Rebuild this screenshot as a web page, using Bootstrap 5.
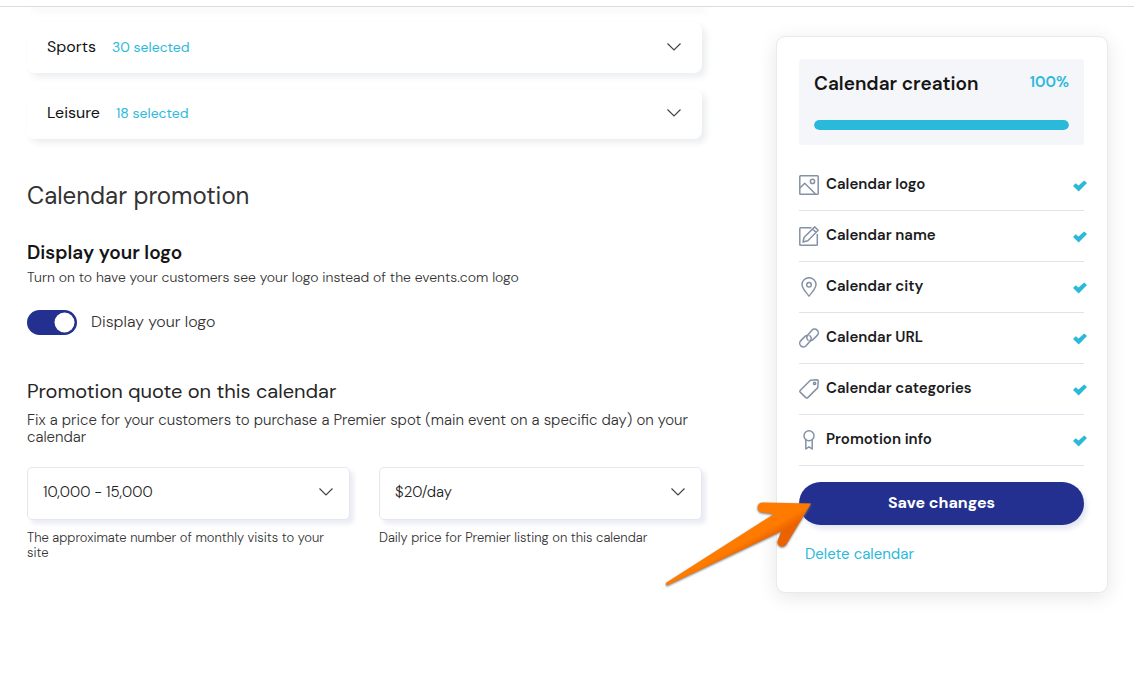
<!DOCTYPE html>
<html lang="en">
<head>
<meta charset="utf-8">
<meta name="viewport" content="width=device-width, initial-scale=1">
<title>Calendar settings</title>
<link href="https://cdn.jsdelivr.net/npm/bootstrap@5.3.0/dist/css/bootstrap.min.css" rel="stylesheet">
<style>
:root { --navy: #24308f; --cyan: #2bb9da; --ink: #1b1c1e; --slate: #8492a6; }
body { font-family: "DM Sans", Inter, "Liberation Sans", sans-serif; font-optical-sizing: none; color: #333; background: #fff; font-size: 15px; line-height: 17px; }
.topbar { height: 7px; border-bottom: 1px solid #d9dce0; z-index: 2; }
.page { padding: 0 26px 88px 27px; gap: 74px; }
.side { flex: 0 0 332px; margin-top: 29px; }
.category { height: 50px; padding: 0 21px 2px 20px; border-radius: 8px; box-shadow: 4px 4px 6px rgba(60, 75, 100, .1); background: #fff; color: #111; }
.category-cut { height: 2px; margin-top: -2px; }
.category-name { font-size: 16px; padding-bottom: 2px; }
.picked { font-size: 14px; color: var(--cyan); }
h2 { font-size: 24px; line-height: 30px; font-weight: 400; margin: 42px 0 0; }
h3 { font-size: 19px; line-height: 24px; font-weight: 600; color: #151515; margin: 30px 0 0; }
h3.quote { font-size: 20px; font-weight: 400; color: #262626; margin-top: 44px; }
.note { font-size: 14px; font-weight: 300; margin: 4px 0 0; }
.intro { font-weight: 300; margin: 9px 0 0; }
.toggle { min-height: 25px; margin: 24px 0 0; padding: 0; gap: 14px; }
.form-switch.toggle .form-check-input { width: 50px; height: 25px; margin: 0; border: 0; background-size: 25px; }
.toggle .form-check-input:checked { background-color: var(--navy);
  background-image: url("data:image/svg+xml,%3Csvg xmlns='http://www.w3.org/2000/svg' viewBox='0 0 25 25'%3E%3Ccircle cx='12.500' cy='12.500' r='10' fill='white'/%3E%3C/svg%3E"); }
.toggle label { font-size: 16px; font-weight: 300; padding-bottom: 2px; }
.fields { --bs-gutter-x: 29px; margin-top: 21px; }
.form-select { height: 53px; padding: 0 40px 2px 15px; font-size: 15px; font-weight: 300; color: #222; border: 1px solid #e6e7ec; border-radius: 5px; box-shadow: 4px 4px 4px rgba(36, 48, 143, .09);
  background-position: right 16px top 20px; background-size: 14px 8px;
  background-image: url("data:image/svg+xml,%3Csvg xmlns='http://www.w3.org/2000/svg' viewBox='0 0 14 8'%3E%3Cpath d='M.5.5 7 7 13.5.5' fill='none' stroke='%23444' stroke-width='1.2'/%3E%3C/svg%3E"); }
.hint { font-size: 13px; line-height: 15px; font-weight: 300; margin-top: 10px; padding-right: 8px; }
.panel { padding: 22px 23px 29px 22px; border: 1px solid #e9eaeb; border-radius: 9px; box-shadow: 0 4px 20px rgba(0, 0, 0, .1); background: #fff; }
.meter { background: #f5f6f9; border-radius: 3px; padding: 13px 15px 15px; }
.meter h3 { margin: 0; }
.percent { color: var(--cyan); font-weight: 600; line-height: 20px; }
.meter .progress { height: 10px; margin-top: 24px; border-radius: 5px; }
.meter .progress-bar { background: var(--cyan); border-radius: 5px; }
.steps { margin: 15px 0 16px; }
.steps li { height: 51px; border-bottom: 1px solid #dde4ec; padding-bottom: 1px; color: var(--ink); font-weight: 600; gap: 7px; }
.steps .glyph { width: 20px; height: 20px; fill: none; stroke: var(--slate); stroke-width: 1.5; stroke-linejoin: round; flex: none; }
.steps .tick { width: 14px; height: 12px; fill: var(--cyan); margin: 3px -3px 0 auto; flex: none; }
.btn-save { height: 43px; border-radius: 22px; background: var(--navy); color: #fff; font-size: 16px; font-weight: 700; padding: 0 0 2px; border: 0; box-shadow: 3px 4px 5px rgba(36, 48, 143, .12); }
.btn-save:hover { background: #1b2575; color: #fff; }
.pointer { position: absolute; top: 19px; right: calc(100% - 14px); width: 147px; height: 87px; pointer-events: none; overflow: visible; }
.remove { color: var(--cyan); margin: 21px 0 0 6px; }
@media (max-width: 800px) { .page { flex-wrap: wrap; gap: 24px; } .side { flex: 1 1 100%; } }
</style>
</head>
<body>
<svg class="d-none" aria-hidden="true">
  <symbol id="tick" viewBox="0 0 14 12"><path d="M0 6 2.7 3.3 5.5 5.6 11.2.5 14 3 5.7 11.6Z"/></symbol>
  <symbol id="chevron" viewBox="0 0 14 8"><path d="M.5.5 7 7 13.5.5" fill="none" stroke="#444" stroke-width="1.2"/></symbol>
</svg>
<header class="topbar bg-white position-relative"></header>
<div class="page d-flex align-items-start">
  <main class="flex-grow-1">
    <div class="d-grid gap-3">
      <div class="category category-cut"></div>
      <button type="button" class="category w-100 border-0 d-flex align-items-center">
        <span class="category-name">Sports</span><span class="picked ms-3">30 selected</span>
        <svg class="ms-auto" width="14" height="8" aria-hidden="true"><use href="#chevron"/></svg>
      </button>
      <button type="button" class="category w-100 border-0 d-flex align-items-center">
        <span class="category-name">Leisure</span><span class="picked ms-3">18 selected</span>
        <svg class="ms-auto" width="14" height="8" aria-hidden="true"><use href="#chevron"/></svg>
      </button>
    </div>
    <h2>Calendar promotion</h2>
    <h3>Display your logo</h3>
    <p class="note">Turn on to have your customers see your logo instead of the events.com logo</p>
    <div class="form-check form-switch toggle d-flex align-items-center">
      <input class="form-check-input" type="checkbox" role="switch" id="show-logo" checked>
      <label for="show-logo">Display your logo</label>
    </div>
    <h3 class="quote">Promotion quote on this calendar</h3>
    <p class="intro">Fix a price for your customers to purchase a Premier spot (main event on a specific day) on your calendar</p>
    <div class="row fields">
      <div class="col-6">
        <select class="form-select" id="visits"><option>10,000 - 15,000</option></select>
        <label class="hint d-block" for="visits">The approximate number of monthly visits to your site</label>
      </div>
      <div class="col-6">
        <select class="form-select" id="price"><option>$20/day</option></select>
        <label class="hint d-block" for="price">Daily price for Premier listing on this calendar</label>
      </div>
    </div>
  </main>
  <aside class="side">
    <div class="panel">
      <div class="meter">
        <div class="d-flex justify-content-between align-items-start"><h3>Calendar creation</h3><span class="percent">100%</span></div>
        <div class="progress" role="progressbar" aria-label="Calendar creation" aria-valuenow="100" aria-valuemin="0" aria-valuemax="100"><div class="progress-bar" style="width: 100%"></div></div>
      </div>
      <ul class="steps list-unstyled">
        <li class="d-flex align-items-center"><svg class="glyph" viewBox="0 0 20 20"><rect x=".8" y=".8" width="18.4" height="18.4" rx=".8"/><circle cx="13.5" cy="6.4" r="2.1"/><path d="M1 13 5.7 8.2 16.5 19"/></svg><span>Calendar logo</span><svg class="tick"><use href="#tick"/></svg></li>
        <li class="d-flex align-items-center"><svg class="glyph" viewBox="0 0 20 20"><path d="M12.5 1.8H1.6Q.8 1.8.8 2.6V18.4Q.8 19.2 1.6 19.2H17.5Q18.3 19.2 18.3 18.4V8"/><path d="M4 16 5.2 11.2 15.7.9 19.2 4.3 8.8 14.7ZM13.6 3 17 6.4"/></svg><span>Calendar name</span><svg class="tick"><use href="#tick"/></svg></li>
        <li class="d-flex align-items-center"><svg class="glyph" viewBox="0 0 20 20"><path d="M10 19.2C8 16 3 12 3 7.5A7 6.8 0 0 1 17 7.5C17 12 12 16 10 19.2Z"/><circle cx="10" cy="7.8" r="2.3"/></svg><span>Calendar city</span><svg class="tick"><use href="#tick"/></svg></li>
        <li class="d-flex align-items-center"><svg class="glyph" viewBox="0 0 20 20"><path d="M9.6 12.6A3.6 3.6 0 0 1 8.3 7.600L12.900 2.200A3.700 3.700 0 0 1 18.200 7.400L14 11.600Q12.300 13 10.600 12"/><path d="M10.400 7.400A3.600 3.600 0 0 1 11.700 12.400L7.100 17.800A3.700 3.700 0 0 1 1.800 12.600L6 8.400Q7.700 7 9.400 8"/></svg><span>Calendar URL</span><svg class="tick"><use href="#tick"/></svg></li>
        <li class="d-flex align-items-center"><svg class="glyph" viewBox="0 0 20 20"><path d="M11.4 1.2 18 .8Q19.2.8 19.2 2L18.8 8.6 8.8 18.6Q7.8 19.6 6.8 18.6L1.2 13.1Q.4 12.2 1.4 11.2Z"/><circle cx="15.6" cy="4.4" r="1.1"/></svg><span>Calendar categories</span><svg class="tick"><use href="#tick"/></svg></li>
        <li class="d-flex align-items-center"><svg class="glyph" viewBox="0 0 20 20"><circle cx="10" cy="5.8" r="5"/><path d="M6.8 9.8V19L10 16.8 13.2 19V9.8"/></svg><span>Promotion info</span><svg class="tick"><use href="#tick"/></svg></li>
      </ul>
      <div class="position-relative">
        <button type="button" class="btn btn-save d-block w-100">Save changes</button>
        <svg class="pointer" viewBox="0 0 147 87" aria-hidden="true">
          <defs><linearGradient id="flame" gradientUnits="userSpaceOnUse" x1="85" y1="25" x2="98" y2="48"><stop offset=".4" stop-color="#ff7b00"/><stop offset=".75" stop-color="#eb6200"/></linearGradient></defs>
          <path d="M145 2.500 96 1.500C90 2 90 11 96 11.500L108 13 .5 81.500C-1 83 0 85 2 84L115.500 30 111.500 40C110.500 45 117 48 120.500 43Z" fill="url(#flame)" style="filter: drop-shadow(0 1px 1px #777)"/>
        </svg>
      </div>
      <a href="#" class="remove d-inline-block text-decoration-none">Delete calendar</a>
    </div>
  </aside>
</div>
<script src="https://cdn.jsdelivr.net/npm/bootstrap@5.3.0/dist/js/bootstrap.bundle.min.js"></script>
</body>
</html>
